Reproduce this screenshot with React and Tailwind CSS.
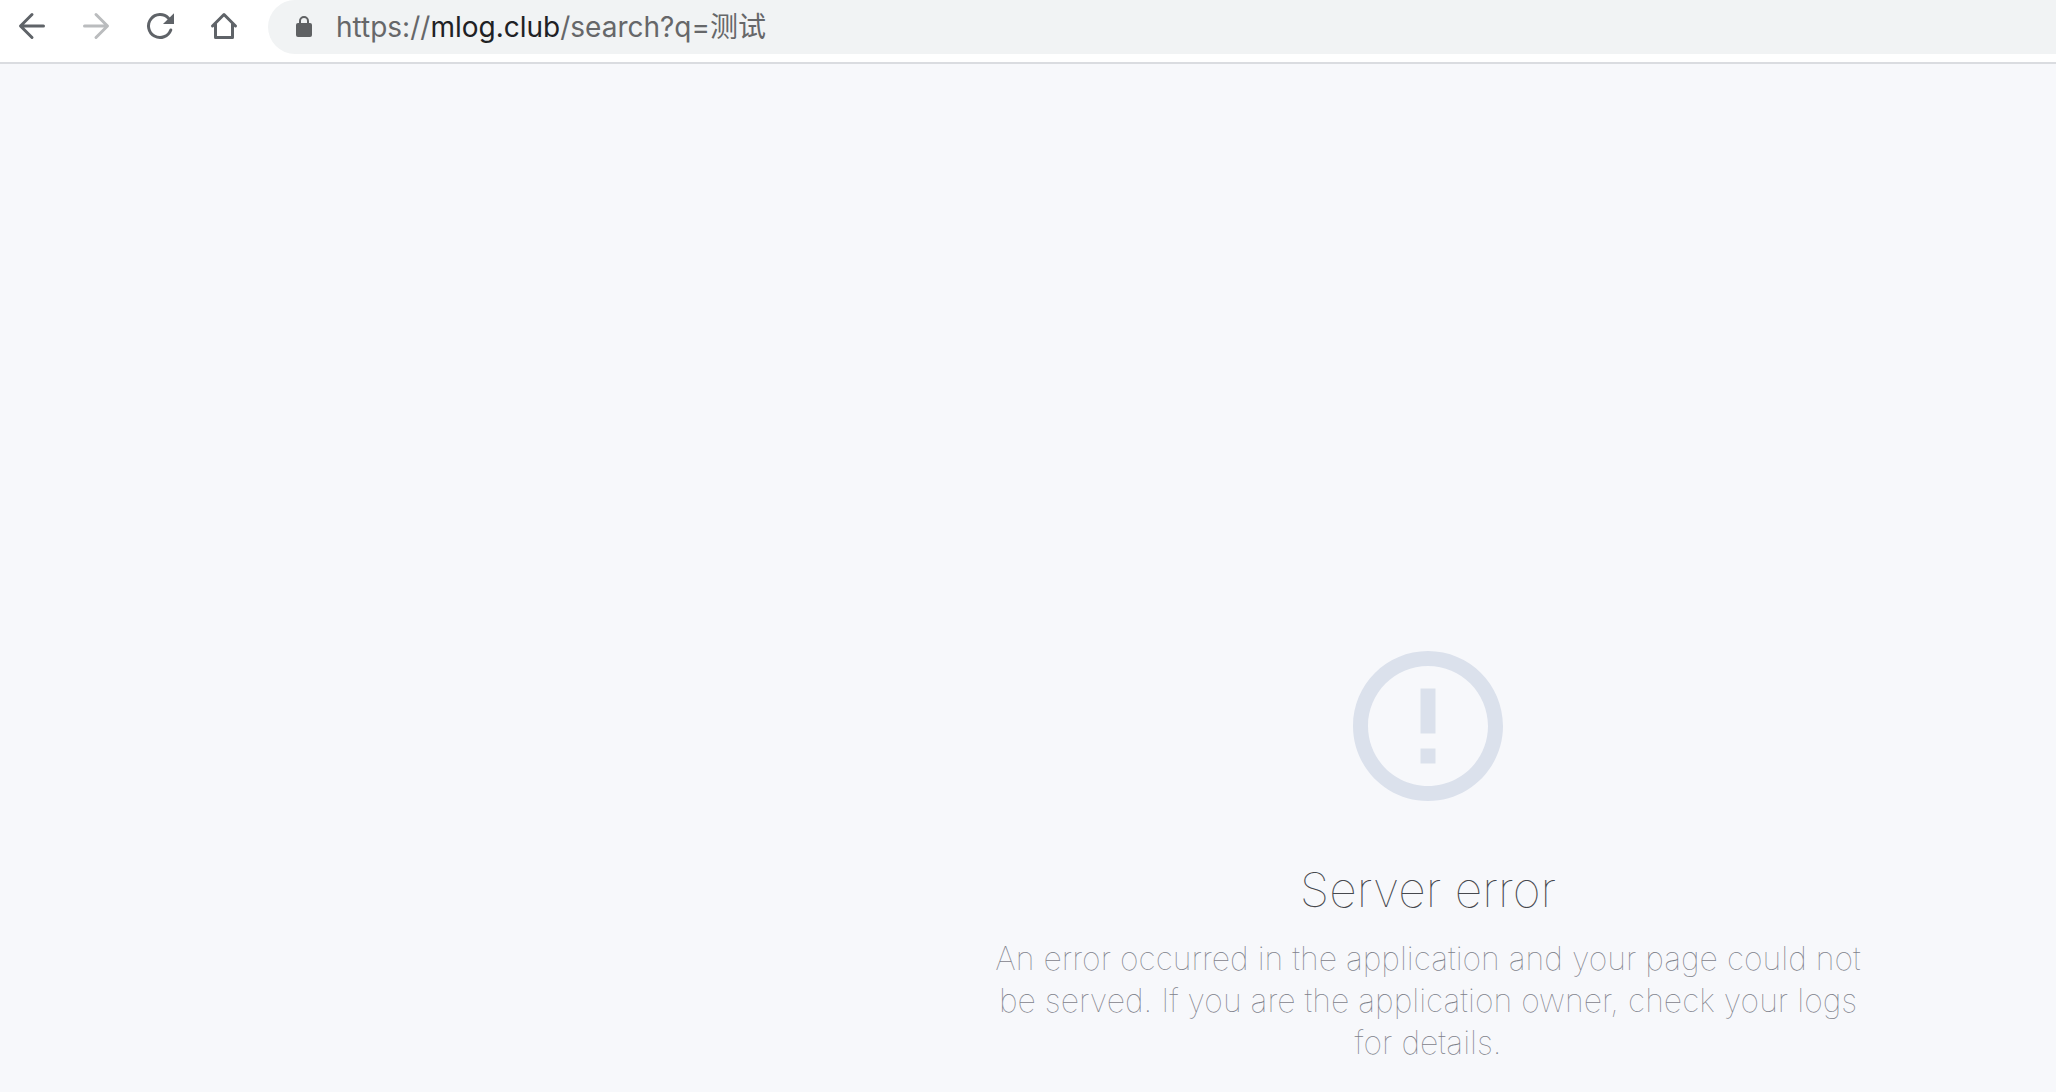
import React, { useState } from 'react';

const NavButton = ({ label, disabled, children }) => (
  <button
    type="button"
    aria-label={label}
    disabled={disabled}
    className="w-8 h-8 flex items-center justify-center text-[#5f6368] disabled:text-[#babcbe]"
  >
    <svg width="32" height="32" viewBox="0 0 32 32" fill="none" stroke="currentColor" strokeWidth="3" strokeLinecap="round" strokeLinejoin="round">
      {children}
    </svg>
  </button>
);

const AddressBar = () => {
  const [url, setUrl] = useState('https://mlog.club/search?q=测试');
  const [editing, setEditing] = useState(false);
  const [, scheme, host, path] = url.match(/^(\w+:\/\/)?([^/]*)(.*)$/);

  return (
    <div className="flex-1 h-[54px] pl-7 flex items-center gap-6 rounded-l-full bg-[#f1f3f4] text-[28px] text-[#666769]">
      <svg width="16" height="22" viewBox="0 0 16 22" className="shrink-0">
        <rect x="0" y="7" width="16" height="14" rx="2" fill="#5f6163" />
        <path d="M4 8V5a4 4 0 0 1 8 0v3" fill="none" stroke="#5f6163" strokeWidth="2" />
      </svg>
      {editing ? (
        <input
          type="text"
          aria-label="Address"
          autoFocus
          value={url}
          onChange={(e) => setUrl(e.target.value)}
          onBlur={() => setEditing(false)}
          className="flex-1 bg-transparent outline-none"
        />
      ) : (
        <button type="button" onClick={() => setEditing(true)} className="flex-1 text-left cursor-text whitespace-nowrap">
          {scheme}
          <span className="text-[#202124]">{host}</span>
          {path}
        </button>
      )}
    </div>
  );
};

const App = () => (
  <div className="min-h-screen flex flex-col bg-[#f7f8fb] font-['Inter','Noto_Sans_CJK_SC',sans-serif]">
    {/* Browser toolbar */}
    <header className="h-16 shrink-0 pl-4 flex items-start bg-white border-b-2 border-[#dadce0]">
      <nav className="h-[52px] mr-7 flex items-center gap-8">
        <NavButton label="Back">
          <path d="M27.500 16H5M16 4.500L4.500 16L16 27.500" />
        </NavButton>
        <NavButton label="Forward" disabled>
          <path d="M4.500 16H27M16 4.500L27.500 16L16 27.500" />
        </NavButton>
        <NavButton label="Reload">
          <path d="M26.800 20A11.500 11.500 0 1 1 24.500 8.200" />
          <path d="M30 3.200V14H19z" fill="currentColor" stroke="none" />
        </NavButton>
        <NavButton label="Home">
          <path d="M4.500 16L16 4.500L27.500 16M7.500 14V27.500H24.500V14" />
        </NavButton>
      </nav>
      <AddressBar />
    </header>

    {/* Error page */}
    <main className="flex-1 pt-[572px] pl-[800px] flex flex-col items-center text-center font-thin">
      <svg width="180" height="180" viewBox="0 0 48 48" fill="#dbe1ec">
        <path d="M22 30h4v4h-4zm0-16h4v12h-4zm1.990-10C12.940 4 4 12.950 4 24s8.940 20 19.990 20S44 35.050 44 24 35.040 4 23.990 4zM24 40c-8.840 0-16-7.160-16-16S15.160 8 24 8s16 7.160 16 16-7.160 16-16 16z" />
      </svg>
      <h1 className="mt-[50px] text-5xl text-[#47494e]">Server error</h1>
      <p className="mt-6 max-w-[900px] text-[32px] leading-[42px] text-[#7f828b]">
        An error occurred in the application and your page could not be served. If you are the application owner, check your logs for details.
      </p>
    </main>
  </div>
);

export default App;
